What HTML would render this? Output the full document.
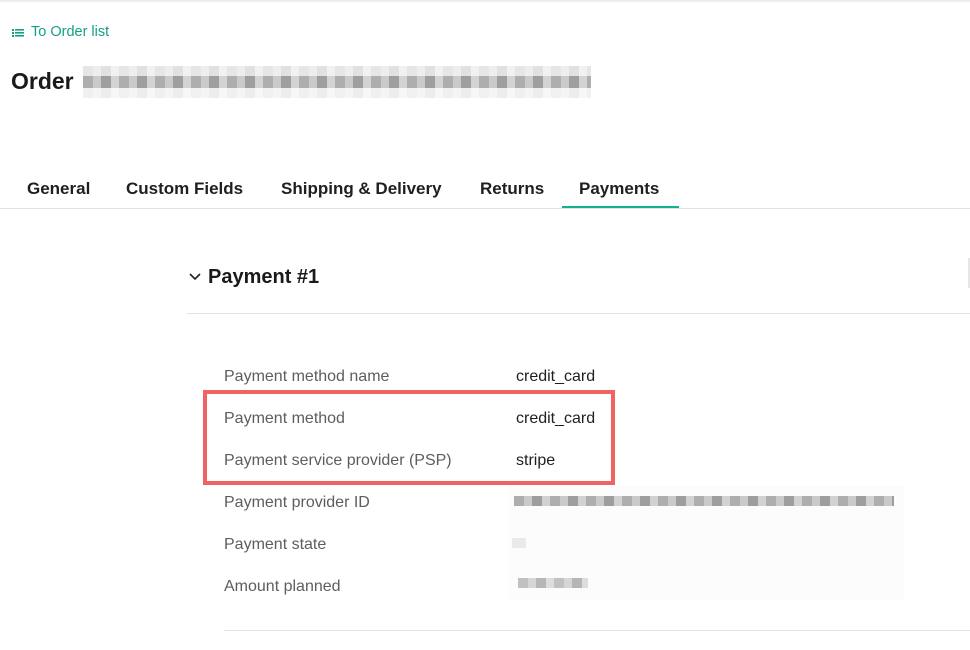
<!DOCTYPE html>
<html><head><style>
body{margin:0;width:970px;height:650px;background:#fff;font-family:"Liberation Sans",sans-serif;position:relative;overflow:hidden}
.a{position:absolute;white-space:nowrap}
.lbl{color:#5d5d5d;font-size:16px}
.val{color:#1f1f1f;font-size:16px}
.blur{position:absolute;background:repeating-linear-gradient(90deg,#9a9a9a 0 10px,#bdbdbd 10px 18px,#878787 18px 28px,#c8c8c8 28px 36px);opacity:.8}
.tab{font-size:17px;color:#1f1f1f;font-weight:bold;top:179px}
</style></head><body>
<div class="a" style="left:0;top:0;width:970px;height:3px;background:linear-gradient(#e6e6e6,#fff)"></div>
<svg class="a" style="left:12px;top:28px" width="13" height="10"><g fill="#14a085"><rect x="0" y="1" width="2" height="2"/><rect x="0" y="4" width="2" height="2"/><rect x="0" y="7" width="2" height="2"/><rect x="3" y="1" width="9" height="1.6"/><rect x="3" y="4" width="9" height="1.6"/><rect x="3" y="7" width="9" height="1.6"/></g></svg>
<div class="a" style="left:31px;top:24px;color:#14a085;font-size:14.5px">To Order list</div>
<div class="a" style="left:11px;top:68px;color:#1a1a1a;font-size:23px;font-weight:bold">Order</div>
<div class="blur" style="left:83px;top:76px;width:508px;height:12px"></div>
<div class="blur" style="left:83px;top:66px;width:508px;height:10px;opacity:.25"></div>
<div class="blur" style="left:83px;top:88px;width:508px;height:10px;opacity:.15"></div>
<div class="a tab" style="left:27px">General</div>
<div class="a tab" style="left:126px">Custom Fields</div>
<div class="a tab" style="left:281px">Shipping &amp; Delivery</div>
<div class="a tab" style="left:480px">Returns</div>
<div class="a tab" style="left:579px">Payments</div>
<div class="a" style="left:562px;top:206px;width:117px;height:2px;background:#14b092"></div>
<div class="a" style="left:0;top:208px;width:970px;height:1px;background:#e2e2e2"></div>
<svg class="a" style="left:189px;top:273px" width="12" height="8"><path d="M1 1L6 6L11 1" stroke="#222" stroke-width="1.6" fill="none"/></svg>
<div class="a" style="left:208px;top:266px;font-size:20px;color:#1a1a1a;font-weight:bold">Payment #1</div>
<div class="a" style="left:968px;top:258px;width:2px;height:30px;background:#e6e6e6"></div>
<div class="a" style="left:187px;top:313px;width:783px;height:1px;background:#e2e2e2"></div>
<div class="a lbl" style="left:224px;top:368px">Payment method name</div><div class="a val" style="left:516px;top:368px">credit_card</div>
<div class="a lbl" style="left:224px;top:410px">Payment method</div><div class="a val" style="left:516px;top:410px">credit_card</div>
<div class="a lbl" style="left:224px;top:452px">Payment service provider (PSP)</div><div class="a val" style="left:516px;top:452px">stripe</div>
<div class="a lbl" style="left:224px;top:494px">Payment provider ID</div>
<div class="a lbl" style="left:224px;top:536px">Payment state</div>
<div class="a lbl" style="left:224px;top:578px">Amount planned</div>
<div class="a" style="left:508px;top:486px;width:396px;height:114px;background:#fcfcfc"></div>
<div class="blur" style="left:514px;top:496px;width:380px;height:10px"></div>
<div class="a" style="left:512px;top:538px;width:14px;height:10px;background:#eaeaea"></div>
<div class="blur" style="left:518px;top:578px;width:70px;height:10px;opacity:.6"></div>
<div class="a" style="left:203px;top:390px;width:404px;height:87px;border:4px solid #f26262"></div>
<div class="a" style="left:224px;top:630px;width:746px;height:1px;background:#e2e2e2"></div>
</body></html>
